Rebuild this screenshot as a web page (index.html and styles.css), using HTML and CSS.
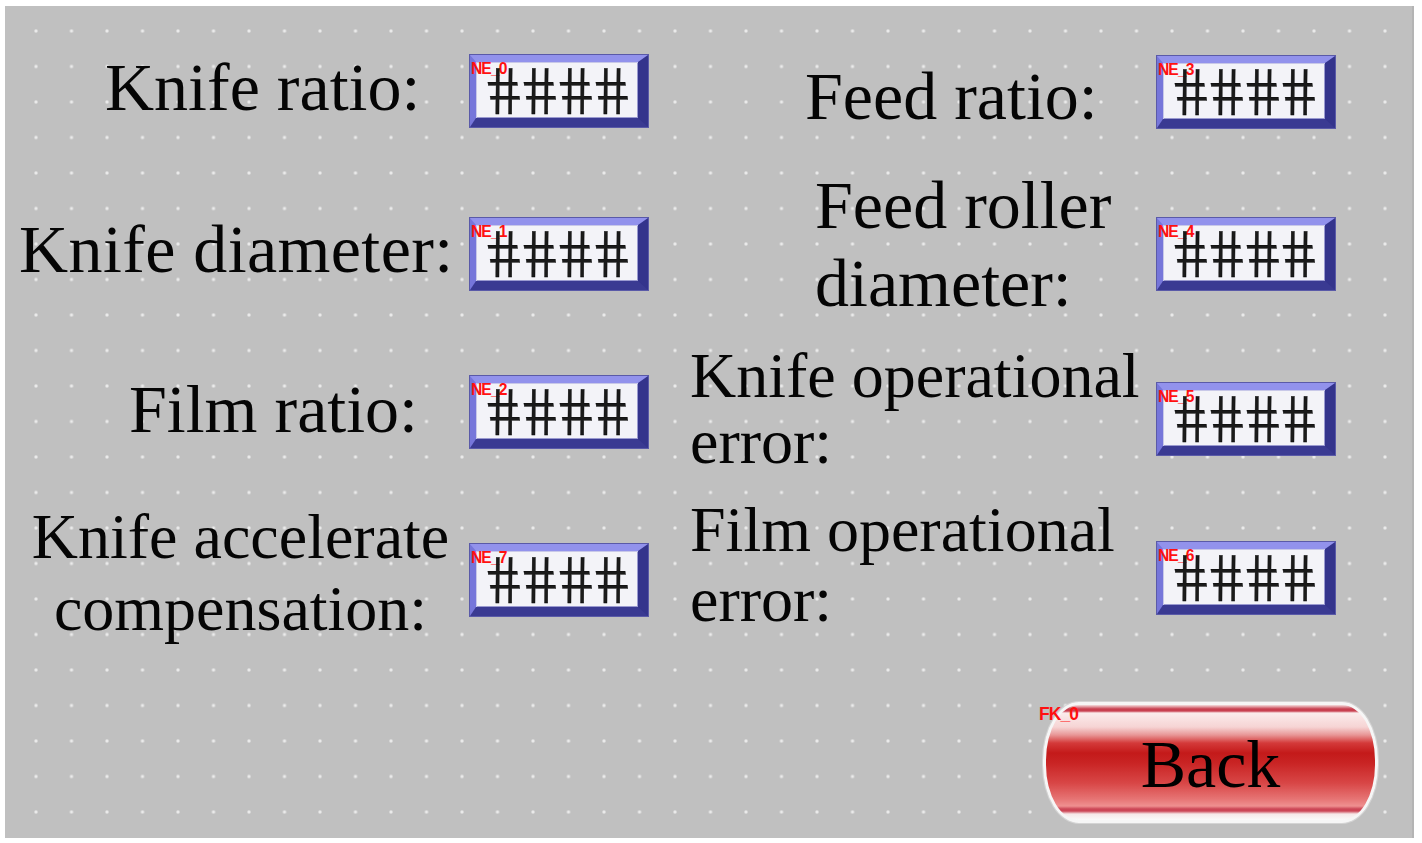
FILE: index.html
```html
<!DOCTYPE html>
<html lang="en">
<head>
<meta charset="utf-8">
<title>Parameters</title>
<link rel="stylesheet" href="styles.css">
</head>
<body>
<div class="screen">
  <div class="fields">
    <div class="col col-left">
      <div class="field la">
        <div class="lbl">Knife ratio:</div>
        <div class="num"><span class="tag">NE_0</span><span class="hash">####</span></div>
      </div>
      <div class="field lb">
        <div class="lbl">Knife diameter:</div>
        <div class="num"><span class="tag">NE_1</span><span class="hash">####</span></div>
      </div>
      <div class="field lc">
        <div class="lbl">Film ratio:</div>
        <div class="num"><span class="tag">NE_2</span><span class="hash">####</span></div>
      </div>
      <div class="field ld">
        <div class="lbl">Knife accelerate<br>compensation:</div>
        <div class="num"><span class="tag">NE_7</span><span class="hash">####</span></div>
      </div>
    </div>
    <div class="col col-right">
      <div class="field ra">
        <div class="lbl">Feed ratio:</div>
        <div class="num"><span class="tag">NE_3</span><span class="hash">####</span></div>
      </div>
      <div class="field rb">
        <div class="lbl">Feed roller<br>diameter:</div>
        <div class="num"><span class="tag">NE_4</span><span class="hash">####</span></div>
      </div>
      <div class="field rc">
        <div class="lbl">Knife operational<br>error:</div>
        <div class="num"><span class="tag">NE_5</span><span class="hash">####</span></div>
      </div>
      <div class="field rd">
        <div class="lbl">Film operational<br>error:</div>
        <div class="num"><span class="tag">NE_6</span><span class="hash">####</span></div>
      </div>
    </div>
  </div>
  <div class="footer">
    <div class="back"><span class="tag tag-fk">FK_0</span><span class="back-text">Back</span></div>
  </div>
</div>
</body>
</html>
```

FILE: styles.css
```css
html, body {
  margin: 0;
  padding: 0;
  background: #ffffff;
}

.screen {
  margin: 6px 0 0 5px;
  width: 1409px;
  height: 832px;
  box-sizing: border-box;
  border-right: 2px solid #b4b4b4;
  background-color: #c0c0c0;
  background-image: radial-gradient(circle at center, rgba(244,244,244,1) 0, rgba(238,238,238,0.85) 1px, rgba(220,220,220,0) 2.3px);
  background-size: 35.5px 35.5px;
  background-position: 13.25px 7.25px;
  display: flex;
  flex-direction: column;
  font-family: "Liberation Serif", "Times New Roman", serif;
  color: #000;
}

.fields {
  display: flex;
  gap: 42px;
}

.col {
  display: flex;
  flex-direction: column;
}

.col-left {
  width: 643px;
  padding-top: 49px;
}

.col-right {
  width: 645px;
  padding-top: 50px;
}

.field {
  display: flex;
  align-items: center;
  height: 72px;
}

.lbl {
  flex: 1;
  font-size: 68px;
  line-height: 68px;
  white-space: nowrap;
  color: #050505;
}

/* left column rows */
.la .lbl { padding-left: 100px; margin-bottom: 9px; }
.lb { margin-top: 90.5px; }
.lb .lbl { padding-left: 14px; margin-bottom: 9px; letter-spacing: 0.4px; }
.lc { margin-top: 86px; }
.lc .lbl { padding-left: 124px; margin-bottom: 5px; }
.ld { margin-top: 96px; }
.ld .lbl {
  font-size: 64px;
  line-height: 72px;
  text-align: center;
  padding-left: 6px;
  margin-bottom: 13px;
}

/* right column rows */
.ra .lbl { padding-left: 115px; margin-top: 8px; }
.rb { margin-top: 90px; }
.rb .lbl { padding-left: 125px; line-height: 78px; margin-bottom: 21px; }
.rc { margin-top: 93px; }
.rc .lbl { font-size: 64px; line-height: 66px; margin-bottom: 20px; }
.rd { margin-top: 87px; }
.rd .lbl { font-size: 64px; line-height: 70px; margin-bottom: 27px; }

/* numeric entry box */
.num {
  position: relative;
  flex: 0 0 178px;
  height: 72px;
  box-sizing: border-box;
  border-style: solid;
  border-width: 7px 10px 9px 6px;
  border-color: #9292ec #34348c #3a3a92 #7676da;
  background: #f3f3f8;
  box-shadow: inset 1px 1px 0 #c8c8e8, inset -1px -1px 0 #9a9ad0, 0 0 0 1px #5a5aa8;
  display: flex;
  align-items: center;
  justify-content: center;
}

.hash {
  display: inline-block;
  font-family: "Liberation Serif", "Times New Roman", serif;
  font-size: 70px;
  line-height: 1;
  letter-spacing: 5px;
  -webkit-text-stroke: 0.4px #000;
  color: #1a1a1a;
  transform: skewX(9deg) scaleX(0.9);
  margin-top: 2px;
  margin-right: -5px;
}

.tag {
  position: absolute;
  top: 0;
  left: -5px;
  font-family: "Liberation Sans", Arial, sans-serif;
  font-weight: bold;
  font-size: 17px;
  line-height: 14px;
  letter-spacing: -1px;
  color: #ff1010;
  transform: scaleX(0.92);
  transform-origin: left top;
}

/* footer / back button */
.footer {
  margin-top: auto;
  display: flex;
  justify-content: flex-end;
  padding: 0 34px 15px 0;
}

.back {
  position: relative;
  width: 335px;
  height: 121px;
  box-sizing: border-box;
  border: 3px solid #f6f6f6;
  border-radius: 36px / 58px;
  box-shadow: 0 0 0 1px #d4d4d4;
  background: linear-gradient(to bottom,
    #f4dede 0,
    #c84050 4px, #c84050 6px,
    #fbecec 8px,
    #f6d4d4 22px,
    #e89696 30px,
    #d43a3a 38px,
    #c41a1a 48px,
    #c92424 58px,
    #d84646 78px,
    #e67474 94px,
    #ef9090 101px,
    #cc4656 104px, #cc4656 106px,
    #f6e8e8 109px,
    #fafafa 115px);
  display: flex;
  align-items: center;
  justify-content: center;
}

.back-text {
  font-family: "Liberation Serif", "Times New Roman", serif;
  font-size: 68px;
  line-height: 68px;
  color: #000;
  margin-top: 2px;
}

.tag-fk {
  top: 1px;
  left: -7px;
  font-size: 19px;
  line-height: 16px;
}
```
